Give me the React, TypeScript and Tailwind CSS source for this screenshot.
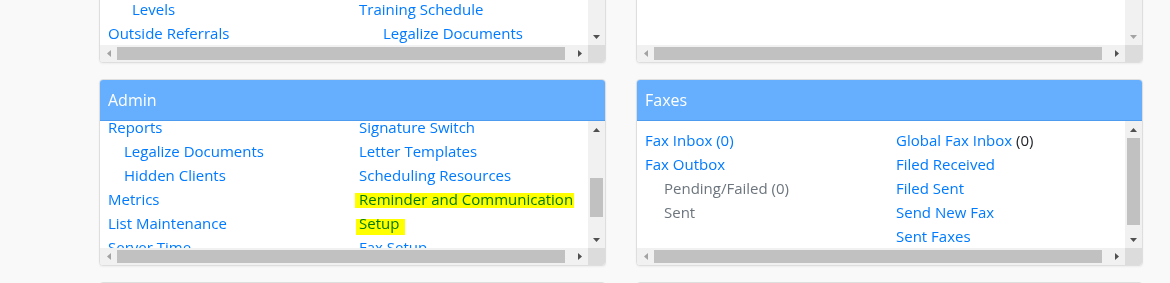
import React from "react";

type Item = {
  text: React.ReactNode;
  indent?: string;
  muted?: boolean;
};

function Tri({ dir, off }: { dir: "up" | "down" | "left" | "right"; off?: boolean }) {
  const fill = off ? "#a3a3a3" : "#505050";
  if (dir === "up")
    return (
      <svg width="7" height="4" viewBox="0 0 7 4">
        <polygon points="0,4 7,4 3.5,0" fill={fill} />
      </svg>
    );
  if (dir === "down")
    return (
      <svg width="7" height="4" viewBox="0 0 7 4">
        <polygon points="0,0 7,0 3.5,4" fill={fill} />
      </svg>
    );
  if (dir === "left")
    return (
      <svg width="4" height="7" viewBox="0 0 4 7">
        <polygon points="4,0 4,7 0,3.5" fill={fill} />
      </svg>
    );
  return (
    <svg width="4" height="7" viewBox="0 0 4 7">
      <polygon points="0,0 0,7 4,3.5" fill={fill} />
    </svg>
  );
}

function VBar({
  thumb,
  upOff,
  downOff,
}: {
  thumb?: [number, number];
  upOff?: boolean;
  downOff?: boolean;
}) {
  return (
    <div className="flex w-[17px] shrink-0 flex-col bg-[#f1f1f1]">
      <div className="flex h-[17px] shrink-0 items-center justify-center">
        <Tri dir="up" off={upOff} />
      </div>
      <div className="flex-1 overflow-hidden px-[2px]">
        {thumb && (
          <div
            className="bg-[#c1c1c1]"
            style={{ marginTop: thumb[0], height: thumb[1] }}
          />
        )}
      </div>
      <div className="flex h-[17px] shrink-0 items-center justify-center">
        <Tri dir="down" off={downOff} />
      </div>
    </div>
  );
}

function HBar() {
  return (
    <div className="flex h-[17px] shrink-0 bg-[#f1f1f1]">
      <div className="flex w-[17px] items-center justify-center">
        <Tri dir="left" off />
      </div>
      <div className="flex-1 py-[2px]">
        <div className="h-full w-[448px] bg-[#c1c1c1]" />
      </div>
      <div className="flex w-[17px] items-center justify-center">
        <Tri dir="right" />
      </div>
      <div className="w-[17px] bg-[#dcdcdc]" />
    </div>
  );
}

function Col({ items }: { items: Item[] }) {
  return (
    <div className="flex flex-col">
      {items.map((it, i) => (
        <div
          key={i}
          className={`h-6 whitespace-nowrap text-[15px] leading-6 ${it.indent ?? ""} ${
            it.muted ? "text-[#6c757d]" : "text-[#007bff]"
          }`}
        >
          {it.text}
        </div>
      ))}
    </div>
  );
}

function Panel({
  title,
  offset,
  left,
  right,
  thumb,
  upOff,
  downOff,
}: {
  title?: string;
  offset: string;
  left: Item[];
  right: Item[];
  thumb?: [number, number];
  upOff?: boolean;
  downOff?: boolean;
}) {
  return (
    <div className="flex h-[187px] flex-col overflow-hidden rounded-[4px] border border-[#dedede] bg-white shadow-[0_1px_2px_rgba(0,0,0,0.05)]">
      <div className="flex h-[41px] shrink-0 items-center border-b border-[#4d9cf0] bg-[#66afff] px-2 text-[16px] text-white">
        {title}
      </div>
      <div className="flex min-h-0 flex-1 flex-col">
        <div className="flex min-h-0 flex-1">
          <div className="min-w-0 flex-1 overflow-hidden">
            <div className={`flex pl-2 ${offset}`}>
              <div className="w-[251px] shrink-0">
                <Col items={left} />
              </div>
              <Col items={right} />
            </div>
          </div>
          <VBar thumb={thumb} upOff={upOff} downOff={downOff} />
        </div>
        <HBar />
      </div>
    </div>
  );
}

function Marked({ children, extra }: { children: React.ReactNode; extra: string }) {
  return (
    <span className="relative">
      {children}
      <span className={`pointer-events-none absolute bg-[#ffff00] mix-blend-multiply ${extra}`} />
    </span>
  );
}

export default function App() {
  return (
    <div className="h-screen overflow-hidden bg-[#f9f9f9] font-['Open_Sans','Noto_Sans',sans-serif]">
      <div className="-mt-[124px] ml-[99px] grid grid-cols-[507px_507px] gap-x-[30px] gap-y-[16px]">
        <Panel
          offset="pt-[79px]"
          thumb={[0, 40]}
          left={[
            { text: "Levels", indent: "pl-6" },
            { text: "Outside Referrals" },
          ]}
          right={[
            { text: "Training Schedule" },
            { text: "Legalize Documents", indent: "pl-6" },
          ]}
        />
        <Panel offset="pt-2" upOff downOff left={[]} right={[]} />
        <Panel
          title="Admin"
          offset="-mt-[6px]"
          thumb={[40, 39]}
          left={[
            { text: "Reports" },
            { text: "Legalize Documents", indent: "pl-4" },
            { text: "Hidden Clients", indent: "pl-4" },
            { text: "Metrics" },
            { text: "List Maintenance" },
            { text: "Server Time" },
          ]}
          right={[
            { text: "Signature Switch" },
            { text: "Letter Templates" },
            { text: "Scheduling Resources" },
            {
              text: (
                <Marked extra="-left-[4px] -right-[1px] top-[4px] h-[15px]">
                  Reminder and Communication
                </Marked>
              ),
            },
            {
              text: (
                <Marked extra="-left-[3px] -right-[6px] top-[6px] h-[16px]">Setup</Marked>
              ),
            },
            { text: "Fax Setup" },
          ]}
        />
        <Panel
          title="Faxes"
          offset="pt-[7px]"
          thumb={[0, 87]}
          left={[
            { text: "Fax Inbox (0)" },
            { text: "Fax Outbox" },
            { text: "Pending/Failed (0)", indent: "pl-[19px]", muted: true },
            { text: "Sent", indent: "pl-[19px]", muted: true },
          ]}
          right={[
            {
              text: (
                <>
                  Global Fax Inbox <span className="text-[#212529]">(0)</span>
                </>
              ),
            },
            { text: "Filed Received" },
            { text: "Filed Sent" },
            { text: "Send New Fax" },
            { text: "Sent Faxes" },
          ]}
        />
        <Panel offset="pt-2" left={[]} right={[]} />
        <Panel offset="pt-2" left={[]} right={[]} />
      </div>
    </div>
  );
}
